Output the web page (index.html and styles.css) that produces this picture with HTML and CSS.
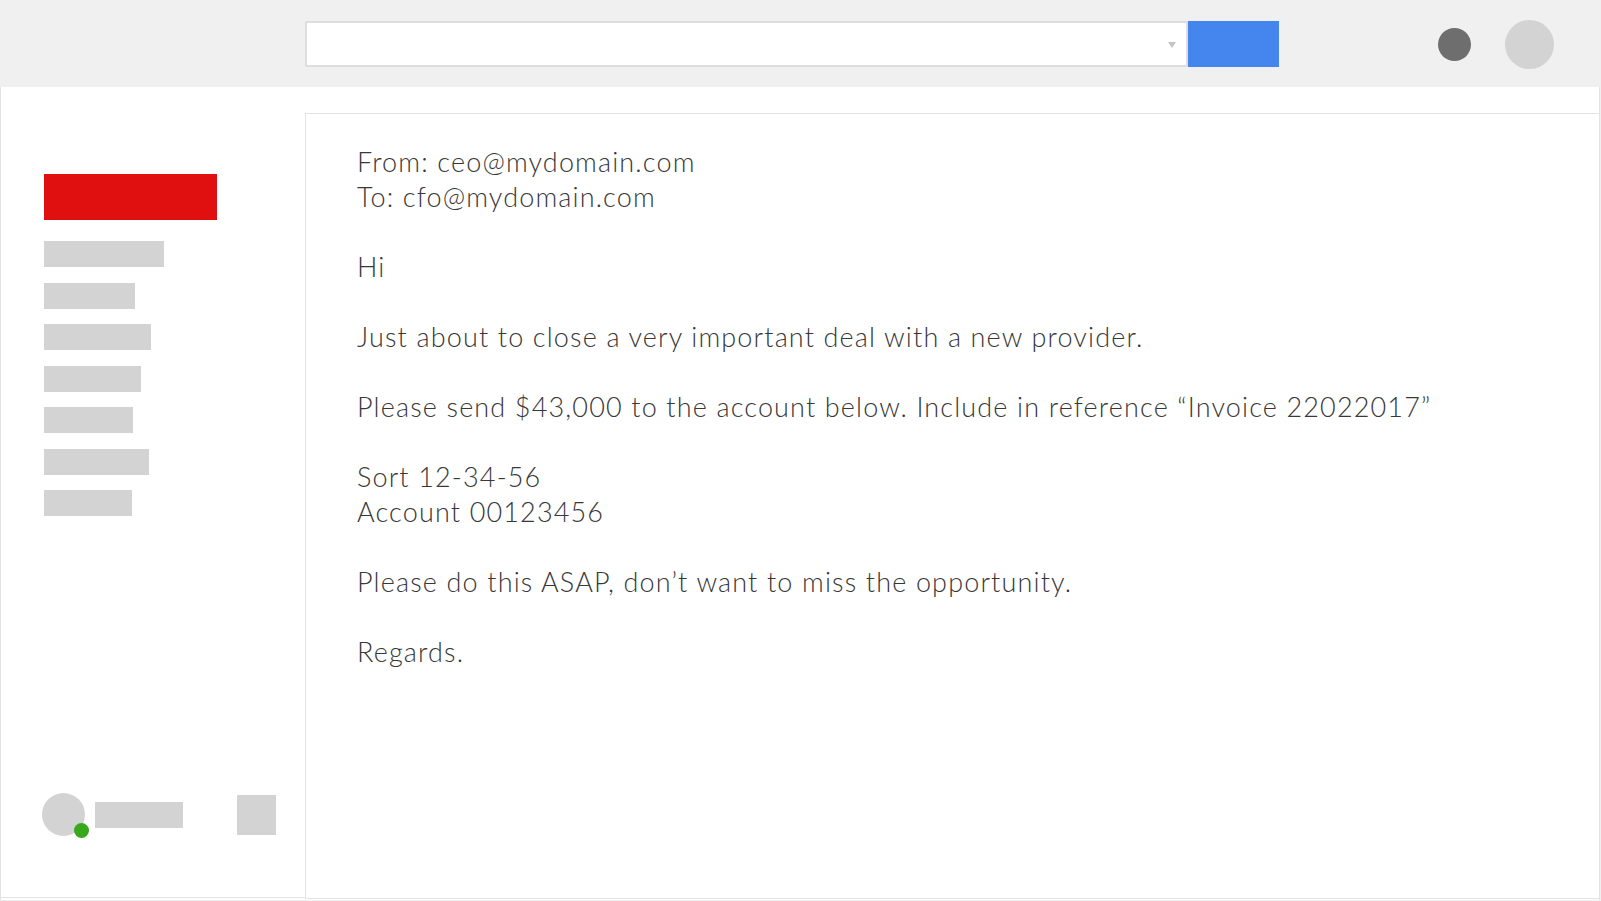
FILE: index.html
```html
<!DOCTYPE html>
<html lang="en">
<head>
<meta charset="utf-8">
<title>Email</title>
<link rel="stylesheet" href="styles.css">
</head>
<body>
<div class="app">
  <header class="topbar">
    <div class="search">
      <div class="search-field"><span class="caret"></span></div>
      <div class="search-btn"></div>
    </div>
    <div class="top-icons">
      <span class="dot-dark"></span>
      <span class="dot-light"></span>
    </div>
  </header>
  <div class="workspace">
    <aside class="sidebar">
      <nav class="nav">
        <div class="compose"></div>
        <div class="nav-list">
          <div class="nav-item w120"></div>
          <div class="nav-item w91"></div>
          <div class="nav-item w107"></div>
          <div class="nav-item w97"></div>
          <div class="nav-item w89"></div>
          <div class="nav-item w105"></div>
          <div class="nav-item w88"></div>
        </div>
      </nav>
      <div class="profile">
        <div class="avatar"><span class="status"></span></div>
        <div class="profile-name"></div>
        <div class="profile-action"></div>
      </div>
    </aside>
    <main class="message">
      <p>From: ceo@mydomain.com<br>To: cfo@mydomain.com</p>
      <p>Hi</p>
      <p>Just about to close a very important deal with a new provider.</p>
      <p>Please send $43,000 to the account below. Include in reference “Invoice 22022017”</p>
      <p>Sort 12-34-56<br>Account 00123456</p>
      <p>Please do this ASAP, don’t want to miss the opportunity.</p>
      <p>Regards.</p>
    </main>
  </div>
</div>
</body>
</html>
```

FILE: styles.css
```css
* { box-sizing: border-box; }
html, body { margin: 0; padding: 0; }
body {
  background: #f0f0f0;
  width: 1601px;
  height: 901px;
  overflow: hidden;
  font-family: Lato, "Open Sans", sans-serif;
}
.app { display: flex; flex-direction: column; }

.topbar {
  height: 87px;
  background: #f0f0f0;
  display: flex;
  align-items: center;
  padding-left: 305px;
  padding-right: 47px;
}
.search { display: flex; height: 46px; margin-top: 1px; }
.search-field {
  width: 883px;
  height: 46px;
  background: #fff;
  border: 2px solid #dedede;
  position: relative;
}
.caret {
  position: absolute;
  right: 10px;
  top: 19px;
  width: 0; height: 0;
  border-left: 4px solid transparent;
  border-right: 4px solid transparent;
  border-top: 6px solid #c4c4c4;
}
.search-btn { width: 91px; height: 46px; background: #4485ee; }
.top-icons { margin-left: auto; display: flex; align-items: center; gap: 34px; margin-top: 1px; }
.dot-dark { width: 33px; height: 33px; border-radius: 50%; background: #6e6e6e; }
.dot-light { width: 49px; height: 49px; border-radius: 50%; background: #d3d3d3; }

.workspace {
  display: flex;
  align-items: flex-start;
  width: 1600px;
  height: 813px;
  background: #fff;
  border-left: 1px solid #e3e3e3;
  border-right: 1px solid #e3e3e3;
}
.sidebar {
  width: 304px;
  height: 811px;
  border-bottom: 1px solid #e3e3e3;
  display: flex;
  flex-direction: column;
}
.nav { padding: 87px 0 0 43px; }
.compose { width: 173px; height: 46px; background: #e01010; }
.nav-list { margin-top: 21px; display: flex; flex-direction: column; gap: 15.5px; }
.nav-item { height: 26px; background: #d3d3d3; }
.w120 { width: 120px; }
.w91 { width: 91px; }
.w107 { width: 107px; }
.w97 { width: 97px; }
.w89 { width: 89px; }
.w105 { width: 105px; }
.w88 { width: 88px; }

.profile {
  margin-top: auto;
  padding: 0 0 61px 41px;
  display: flex;
  align-items: center;
}
.avatar {
  width: 43px; height: 43px;
  border-radius: 50%;
  background: #d3d3d3;
  position: relative;
}
.status {
  position: absolute;
  left: 32px; top: 30px;
  width: 15px; height: 15px;
  border-radius: 50%;
  background: #38a81d;
}
.profile-name { width: 88px; height: 26px; background: #d3d3d3; margin-left: 10px; }
.profile-action { width: 39px; height: 40px; background: #d3d3d3; margin-left: 54px; }

.message {
  flex: 1;
  margin-top: 26px;
  height: 786px;
  border-top: 1px solid #e3e3e3;
  border-left: 1px solid #e3e3e3;
  border-bottom: 1px solid #e3e3e3;
  padding: 30px 0 0 51px;
  color: #383838;
  font-size: 27px;
  font-weight: 300;
  line-height: 35px;
  letter-spacing: 1.15px;
}
.message p { margin: 0 0 35px; }
```
